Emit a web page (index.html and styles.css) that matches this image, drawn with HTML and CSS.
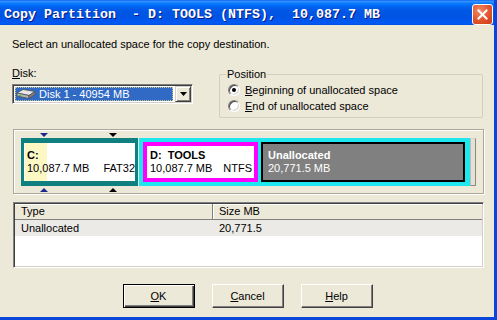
FILE: index.html
```html
<!DOCTYPE html>
<html>
	<head>
		<title>Copy Partition</title>
		<link rel="stylesheet" href="styles.css">
	</head>
	<body>
		<div class="window">
			<div class="titlebar">
				<span class="title">Copy Partition  - D: TOOLS (NTFS),  10,087.7 MB</span>
				<span class="close">
					<svg width="11" height="11" viewBox="0 0 11 11"><path d="M1.5 1.5 L9.5 9.5 M9.5 1.5 L1.5 9.5" stroke="#fff" stroke-width="2" stroke-linecap="square"/></svg>
				</span>
			</div>
			<div class="content">
				<p class="intro">Select an unallocated space for the copy destination.</p>

				<div class="top-row">
					<div class="disk">
						<div class="label"><u>D</u>isk:</div>
						<div class="combo">
							<div class="combo-value">
								<svg class="drive" width="20" height="12" viewBox="0 0 20 12">
									<polygon points="1,5 7,1.5 19,3.5 13,7.5" fill="#e6e6e6" stroke="#505050" stroke-width="0.8"/>
									<polygon points="1,5 13,7.5 13,10.5 1,8" fill="#b4b4b4" stroke="#505050" stroke-width="0.8"/>
									<polygon points="13,7.5 19,3.5 19,6.5 13,10.5" fill="#808080" stroke="#505050" stroke-width="0.8"/>
									<rect x="3" y="7" width="2" height="1" fill="#30d030"/>
								</svg>
								<span>Disk 1 - 40954 MB</span>
							</div>
							<div class="combo-btn">
								<svg width="7" height="4" viewBox="0 0 7 4"><polygon points="0,0 7,0 3.5,4" fill="#000"/></svg>
							</div>
						</div>
					</div>
					<fieldset class="group">
						<legend>Position</legend>
						<div class="radio"><span class="dot checked"></span><span><u>B</u>eginning of unallocated space</span></div>
						<div class="radio"><span class="dot"></span><span><u>E</u>nd of unallocated space</span></div>
					</fieldset>
				</div>

				<div class="map">
					<div class="part part-c">
						<div class="part-name">C:</div>
						<div class="part-info"><span>10,087.7 MB</span><span>FAT32</span></div>
					</div>
					<div class="extended">
						<div class="part part-d">
							<div class="part-name">D:  TOOLS</div>
							<div class="part-info"><span>10,087.7 MB</span><span>NTFS</span></div>
						</div>
						<div class="part part-free">
							<div class="part-name">Unallocated</div>
							<div class="part-info"><span>20,771.5 MB</span></div>
						</div>
					</div>
					<div class="map-scroll"></div>
					<span class="marker down blue" style="left:26px"></span>
					<span class="marker down black" style="left:95px"></span>
					<span class="marker up blue" style="left:26px"></span>
					<span class="marker up black" style="left:95px"></span>
				</div>

				<div class="list">
					<div class="list-head">
						<div class="col-type">Type</div>
						<div class="col-size">Size MB</div>
					</div>
					<div class="list-row">
						<div class="col-type">Unallocated</div>
						<div class="col-size">20,771.5</div>
					</div>
				</div>

				<div class="buttons">
					<button class="btn default"><u>O</u>K</button>
					<button class="btn"><u>C</u>ancel</button>
					<button class="btn"><u>H</u>elp</button>
				</div>
			</div>
		</div>
	</body>
</html>
```

FILE: styles.css
```css
* {
	box-sizing: border-box;
}
body {
	margin: 0;
	background: #ece9d8;
	font-family: "Liberation Sans", Arial, sans-serif;
	font-size: 11px;
	color: #000;
}
u {
	text-decoration: underline;
	text-underline-offset: 1px;
}

.window {
	width: 497px;
	height: 320px;
	background: #ece9d8;
	border-right: 3px solid #0846dc;
	border-bottom: 3px solid #0846dc;
	display: flex;
	flex-direction: column;
}

/* title bar */
.titlebar {
	height: 25px;
	flex-shrink: 0;
	display: flex;
	align-items: center;
	padding: 3px 1px 0 4px;
	background: linear-gradient(to bottom, #0058ee 0, #3a93ff 1px, #288eff 2px, #127dff 3px, #036ffc 5px, #0262ee 7px, #0057e5 11px, #0054e3 16px, #0055eb 20px, #005bf5 23px, #0050df 25px);
}
.title {
	font-family: "Liberation Mono", monospace;
	font-weight: bold;
	font-size: 13.33px;
	color: #fff;
	white-space: pre;
	text-shadow: 1px 1px #0a1883;
}
.close {
	margin-left: auto;
	width: 21px;
	height: 21px;
	border: 1px solid #fff;
	border-radius: 3px;
	background: radial-gradient(circle at 35% 30%, #f08a64 0, #e2542b 55%, #c83d14 100%);
	display: flex;
	align-items: center;
	justify-content: center;
}

/* body */
.content {
	flex: 1;
	padding: 0 11px 0 12px;
}
.intro {
	margin: 13px 0 0;
	line-height: 13px;
}

.top-row {
	margin-top: 16px;
	display: flex;
	justify-content: space-between;
	align-items: flex-start;
}
.disk {
	width: 181px;
}
.label {
	line-height: 13px;
}
.combo {
	margin-top: 4px;
	height: 20px;
	padding: 1px;
	display: flex;
	background: #fff;
	border: 1px solid;
	border-color: #808080 #fff #fff #808080;
	box-shadow: inset 1px 1px #404040, inset -1px -1px #d4d0c8;
}
.combo-value {
	flex: 1;
	margin: 1px;
	background: #316ac5;
	color: #fff;
	display: flex;
	align-items: center;
	outline: 1px dotted #c8c890;
	outline-offset: -1px;
}
.drive {
	margin: 0 3px 0 1px;
}
.combo-btn {
	width: 16px;
	height: 16px;
	margin-left: 1px;
	background: #ece9d8;
	border: 1px solid;
	border-color: #d4d0c8 #404040 #404040 #d4d0c8;
	box-shadow: inset 1px 1px #fff, inset -1px -1px #808080;
	display: flex;
	align-items: center;
	justify-content: center;
}

.group {
	margin: 1px 0 0;
	width: 264px;
	height: 50px;
	padding: 1px 0 3px 8px;
	border: 1px solid #d0d0bf;
	border-radius: 2px;
	min-inline-size: 0;
}
.group legend {
	padding: 0 1px;
	margin-left: -2px;
	line-height: 13px;
}
.radio {
	height: 16px;
	line-height: 16px;
	display: flex;
	align-items: center;
}
.dot {
	width: 12px;
	height: 12px;
	margin-right: 5px;
	border-radius: 50%;
	background: #fff;
	border: 1px solid;
	border-color: #808080 #fff #fff #808080;
	box-shadow: inset 1px 1px #404040, inset -1px -1px #d4d0c8;
	display: flex;
	align-items: center;
	justify-content: center;
}
.dot.checked::after {
	content: "";
	width: 4px;
	height: 4px;
	border-radius: 50%;
	background: #000;
}

/* partition map */
.map {
	position: relative;
	margin: 11px 0 0 1px;
	width: 471px;
	height: 65px;
	padding: 8px 0 0 7px;
	display: flex;
	border: 1px solid #aca899;
	box-shadow: inset 1px 1px #fff, 1px 1px #fff;
}
.part {
	height: 48px;
	display: flex;
	flex-direction: column;
	justify-content: center;
	line-height: 13px;
	padding: 0 2px 0 3px;
	white-space: pre;
}
.part-name {
	font-weight: bold;
}
.part-info {
	display: flex;
	justify-content: space-between;
}
.part-c {
	width: 117px;
	margin-right: 1px;
	border: solid #0f7f7f;
	border-width: 5px 3px;
	padding-right: 0;
	background: linear-gradient(to right, #fff 0 1px, #fbf8c4 1px 23px, #fff 23px);
}
.extended {
	width: 331px;
	height: 48px;
	padding: 4px 5px 4px 4px;
	display: flex;
	gap: 3px;
	background: #1ee8ee;
}
.part-d {
	width: 115px;
	height: 40px;
	border: 4px solid #ff00ff;
	background: #fff;
	padding-right: 2px;
}
.part-free {
	flex: 1;
	height: 40px;
	border: 2px solid #000;
	background: #808080;
	color: #fff;
	padding-left: 5px;
}
.map-scroll {
	width: 6px;
	height: 48px;
	background: #e4e2d8;
	border: 1px solid;
	border-color: #d8d6cc #8c8a80 #8c8a80 #c0beb4;
}
.marker {
	position: absolute;
	width: 0;
	height: 0;
	border-left: 4px solid transparent;
	border-right: 4px solid transparent;
}
.marker.down {
	top: 3px;
	border-top: 4px solid;
}
.marker.up {
	top: 58px;
	border-bottom: 4px solid;
}
.marker.blue {
	color: #1c2a8c;
}
.marker.black {
	color: #000;
}

/* list */
.list {
	margin: 8px 0 0 1px;
	width: 471px;
	height: 66px;
	padding: 1px;
	background: #fff;
	border: 1px solid;
	border-color: #808080 #fff #fff #808080;
	box-shadow: inset 1px 1px #404040, inset -1px -1px #d4d0c8;
}
.list-head,
.list-row {
	display: flex;
	height: 16px;
	line-height: 16px;
}
.list-head {
	background: #ece9d8;
	border-bottom: 1px solid #808080;
	box-shadow: inset 0 1px #fff;
	line-height: 15px;
}
.list-row {
	background: #ebeae6;
}
.col-type {
	width: 198px;
	padding-left: 6px;
}
.col-size {
	flex: 1;
	padding-left: 6px;
}
.list-head .col-type {
	border-right: 1px solid #808080;
}
.list-head .col-size {
	box-shadow: inset 1px 0 #fff;
}

/* buttons */
.buttons {
	margin-top: 16px;
	display: flex;
	justify-content: center;
	gap: 17px;
}
.btn {
	width: 72px;
	height: 24px;
	padding: 0;
	font-family: "Liberation Sans", Arial, sans-serif;
	font-size: 11px;
	color: #000;
	background: #ece9d8;
	border: 1px solid;
	border-color: #fff #404040 #404040 #fff;
	box-shadow: inset -1px -1px #808080;
}
.btn.default {
	border-color: #000;
	box-shadow: inset 1px 1px #fff, inset -1px -1px #404040, inset -2px -2px #808080;
}
```
